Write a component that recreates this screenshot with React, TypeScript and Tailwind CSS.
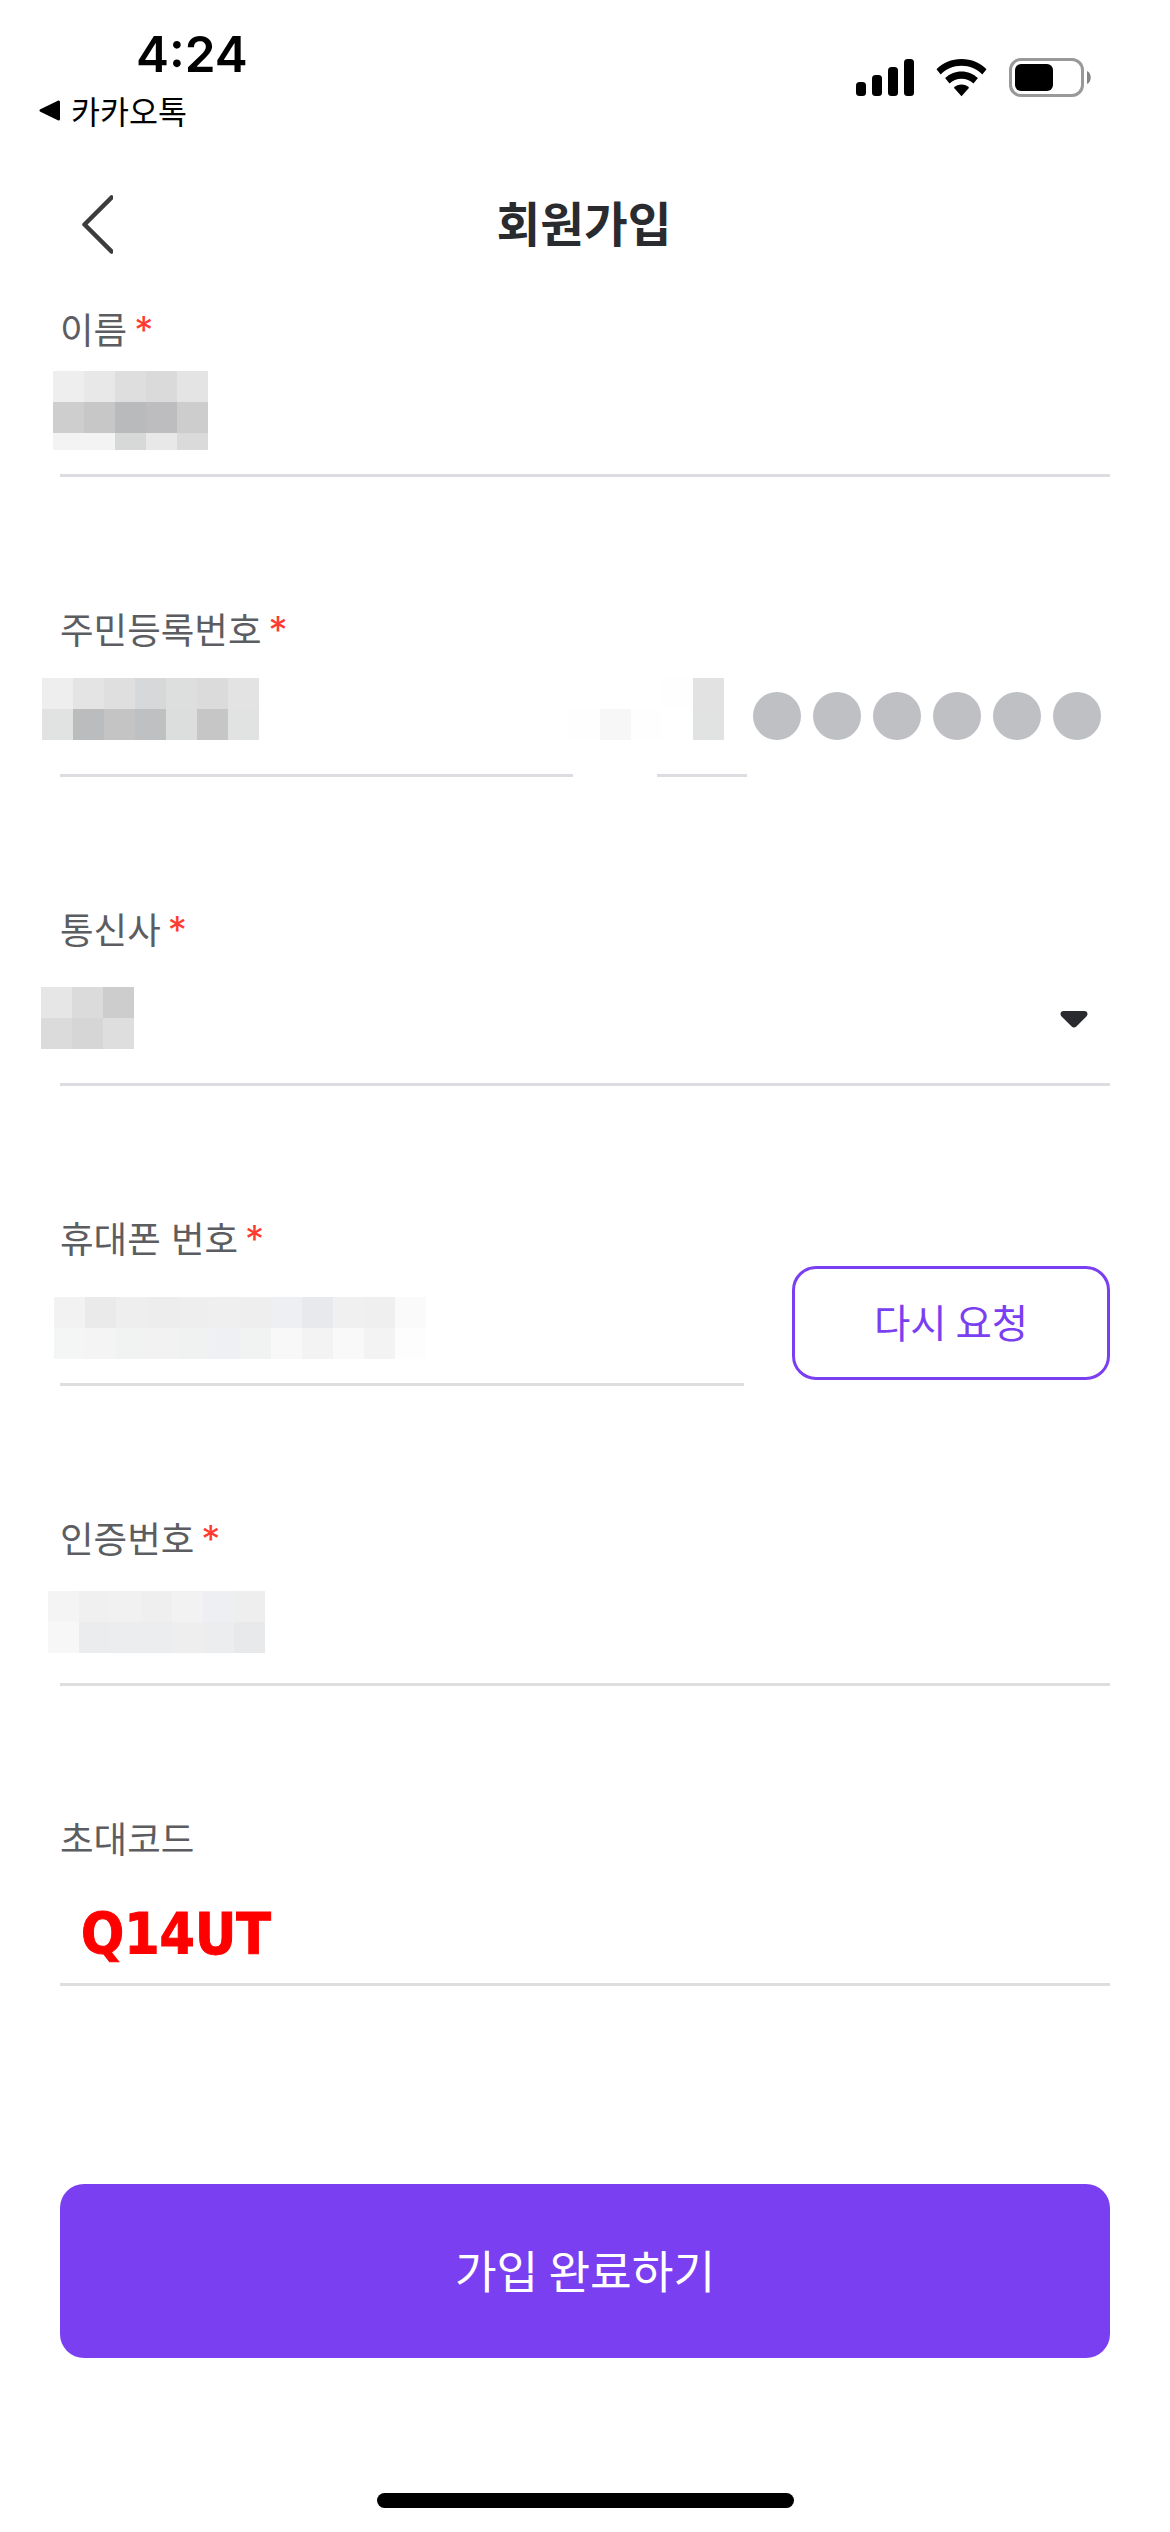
import type { ReactNode } from "react";

const nameMosaic = [
  ["#eeeeee", "#e8e8e8", "#dedede", "#dadada", "#e4e4e4"],
  ["#cecece", "#c7c7c7", "#b8babc", "#bdbdbf", "#cdcdcd"],
  ["#f3f3f3", "#f3f3f3", "#d6d9d7", "#e8e8e8", "#dadada"],
];

const birthMosaic = [
  ["#eeeeee", "#e4e4e4", "#dfdfdf", "#d6d8da", "#dcdfdd", "#dbdbdb", "#e3e3e3"],
  ["#e0e3e1", "#bbbcbe", "#c4c4c4", "#bfc0c2", "#dbdedc", "#c6c6c6", "#e0e3e1"],
];

const genderMosaic = [
  ["#ffffff", "#ffffff", "#ffffff", "#fefefe", "#e2e2e2"],
  ["#fefefe", "#f7f7f7", "#fefefe", "#ffffff", "#e0e3e1"],
];

const carrierMosaic = [
  ["#e6e6e6", "#dbdbdb", "#cdcdcd"],
  ["#dbdbdb", "#d6d6d6", "#dedede"],
];

const phoneMosaic = [
  ["#f2f2f2", "#eaeaea", "#eeeeee", "#ededed", "#eeeeee", "#efefef", "#eeeeee", "#eeeff3", "#e7e9ec", "#f0f0f0", "#efefef", "#fafafa"],
  ["#f4f6f5", "#f4f4f4", "#f1f3f2", "#f2f2f2", "#f0f2f1", "#eef0f4", "#f1f3f2", "#f8f8f8", "#f3f3f3", "#f9f9f9", "#f3f3f3", "#fdfdfd"],
];

const codeMosaic = [
  ["#f4f4f4", "#f0f0f0", "#f1f1f1", "#efefef", "#f2f2f2", "#eeeff2", "#eeeeee"],
  ["#f7f7f7", "#ebecee", "#ecedef", "#ecedef", "#eeeeee", "#ecedef", "#e8e9eb"],
];

const CELL = 31;

function Mosaic({ cells, height, className }: { cells: string[][]; height: number; className: string }) {
  return (
    <svg
      width={cells[0].length * CELL}
      height={height}
      shapeRendering="crispEdges"
      className={`block shrink-0 ${className}`}
    >
      {cells.map((row, y) =>
        row.map((fill, x) => (
          <rect key={`${x}-${y}`} x={x * CELL} y={y * CELL} width={CELL} height={CELL} fill={fill} />
        ))
      )}
    </svg>
  );
}

function Label({ children, required = true }: { children: ReactNode; required?: boolean }) {
  return (
    <label className="flex h-[54px] shrink-0 items-baseline gap-[7px] pt-[5px] text-[36.5px] leading-[54px] text-[#5c5d61] [word-spacing:2px]">
      <span>{children}</span>
      {required && (
        <span className="pb-[2px] font-['Inter'] text-[38px] leading-none text-[#ff3b30]">*</span>
      )}
    </label>
  );
}

function StatusBar() {
  return (
    <div className="flex h-[150px] shrink-0 justify-between pl-[38px] pr-[78px]">
      <div className="pt-[24px]">
        <div className="pl-[98px] font-['Inter'] text-[49.500px] font-semibold leading-[60px]">4:24</div>
        <div className="flex items-center gap-[10px] pt-[2px] text-[31.5px] leading-[48px]">
          <svg width="23" height="23" viewBox="0 0 23 23">
            <path d="M3 11.5 20.5 3v17z" stroke="black" strokeWidth="3" strokeLinejoin="round" />
          </svg>
          카카오톡
        </div>
      </div>
      <div className="flex items-start gap-[22px] pt-[58px]">
        <svg width="58" height="39" viewBox="0 0 58 39">
          <rect x="0" y="24" width="10" height="14" rx="3.5" />
          <rect x="16" y="17" width="10" height="21" rx="3.5" />
          <rect x="32" y="9" width="10" height="29" rx="3.5" />
          <rect x="48" y="1" width="10" height="37" rx="3.5" />
        </svg>
        <svg width="51" height="39" viewBox="0 0 51 39">
          <path d="M25.5 1C35.5 1 44.500 5 50.500 11.200L46.300 16.400C41 11 33.500 7.800 25.500 7.800S10 11 4.700 16.400L.5 11.200C6.500 5 15.500 1 25.500 1Z" />
          <path d="M25.500 13.500C31.800 13.500 37.600 16 41.900 20.100L37.500 25.500C34.300 22.500 30.100 20.700 25.500 20.700S16.700 22.500 13.500 25.500L9.100 20.100C13.400 16 19.200 13.500 25.500 13.500Z" />
          <path d="M25.500 26.500C28.400 26.500 31.100 27.700 33.100 29.700L25.500 38.200 17.900 29.700C19.900 27.700 22.600 26.500 25.500 26.500Z" />
        </svg>
        <svg width="83" height="39" viewBox="0 0 83 39">
          <rect x="1.500" y="1.500" width="72" height="36" rx="10.500" fill="none" stroke="#999" strokeWidth="3" />
          <rect x="6" y="6" width="38" height="27" rx="6" />
          <path d="M78 13c5 2 5 11 0 13z" fill="#858585" />
        </svg>
      </div>
    </div>
  );
}

function NavBar() {
  return (
    <div className="grid h-[147px] shrink-0 grid-cols-[120px_1fr_120px] items-center">
      <svg width="32" height="60" viewBox="0 0 32 60" className="ml-[81px]">
        <path
          d="M30.500 3.500 3.500 30.500l27 27"
          fill="none"
          stroke="#3c3c3e"
          strokeWidth="4.500"
          strokeLinecap="round"
          strokeLinejoin="round"
        />
      </svg>
      <h1 className="pb-[3px] pr-[2px] text-center text-[47.500px] font-bold leading-[70px] text-[#2a2b2f]">회원가입</h1>
    </div>
  );
}

export default function App() {
  return (
    <main className="flex h-[2532px] w-[1170px] flex-col overflow-hidden bg-white font-['Noto_Sans_CJK_KR',sans-serif] text-black">
      <StatusBar />
      <NavBar />

      <form className="flex flex-col gap-[120px] px-[60px]">
        <div className="flex h-[180px] flex-col border-b-3 border-[#dddde1]">
          <Label>이름</Label>
          <Mosaic cells={nameMosaic} height={79} className="-ml-[7px] mt-[20px]" />
        </div>

        {/* Resident number: birth date, first digit, six masked digits */}
        <div className="flex h-[180px] flex-col">
          <Label>주민등록번호</Label>
          <div className="flex h-[126px]">
            <div className="w-[513px] border-b-3 border-[#dddde1]">
              <Mosaic cells={birthMosaic} height={62} className="-ml-[18px] mt-[27px]" />
            </div>
            <div className="ml-[84px] w-[90px] border-b-3 border-[#dddde1]">
              <Mosaic cells={genderMosaic} height={62} className="-ml-[88px] mt-[27px]" />
            </div>
            <div className="ml-[6px] mt-[41px] flex gap-[12px]">
              {[0, 1, 2, 3, 4, 5].map((i) => (
                <span key={i} className="size-[48px] rounded-full bg-[#bfc0c4]" />
              ))}
            </div>
          </div>
        </div>

        <div className="flex h-[189px] flex-col border-b-3 border-[#dddde1]">
          <Label>통신사</Label>
          <div className="flex items-center justify-between pr-[22px] pt-[36px]">
            <Mosaic cells={carrierMosaic} height={62} className="-ml-[19px]" />
            <svg width="28" height="17" viewBox="0 0 30 18" fill="#2a2b2f" className="mt-[3px]">
              <path d="M4 0h22c3.500 0 4.500 3.500 2.300 5.700L17.500 16.500c-1.500 1.400-3.500 1.400-5 0L1.700 5.700C-.5 3.500.5 0 4 0z" />
            </svg>
          </div>
        </div>

        <div className="flex h-[180px] justify-between">
          <div className="flex w-[684px] flex-col border-b-3 border-[#dddee0]">
            <Label>휴대폰 번호</Label>
            <Mosaic cells={phoneMosaic} height={62} className="-ml-[6px] mt-[37px]" />
          </div>
          <button
            type="button"
            className="mt-[60px] h-[114px] w-[318px] rounded-3xl border-3 border-[#7b3ff2] pb-[4px] text-[39.500px] leading-none text-[#7b3ff2]"
          >
            다시 요청
          </button>
        </div>

        <div className="flex h-[180px] flex-col border-b-3 border-[#dddee0]">
          <Label>인증번호</Label>
          <Mosaic cells={codeMosaic} height={62} className="-ml-[12px] mt-[31px]" />
        </div>

        <div className="flex h-[180px] flex-col border-b-3 border-[#dddee0]">
          <Label required={false}>초대코드</Label>
          <span className="pl-[21px] pt-[41px] font-['DejaVu_Sans_Condensed','DejaVu_Sans',sans-serif] text-[56.500px] font-bold leading-[68px] text-[#ff0000] [-webkit-text-stroke:1px_#ff0000] [font-stretch:condensed]">
            Q14UT
          </span>
        </div>
      </form>

      <div className="mt-[198px] px-[60px]">
        <button type="button" className="h-[174px] w-full rounded-3xl bg-[#7b3ff2] pb-[2px] text-[45.300px] leading-none text-white">
          가입 완료하기
        </button>
      </div>

      <div className="mb-[24px] mt-auto h-[15px] w-[417px] self-center rounded-full bg-black" />
    </main>
  );
}
